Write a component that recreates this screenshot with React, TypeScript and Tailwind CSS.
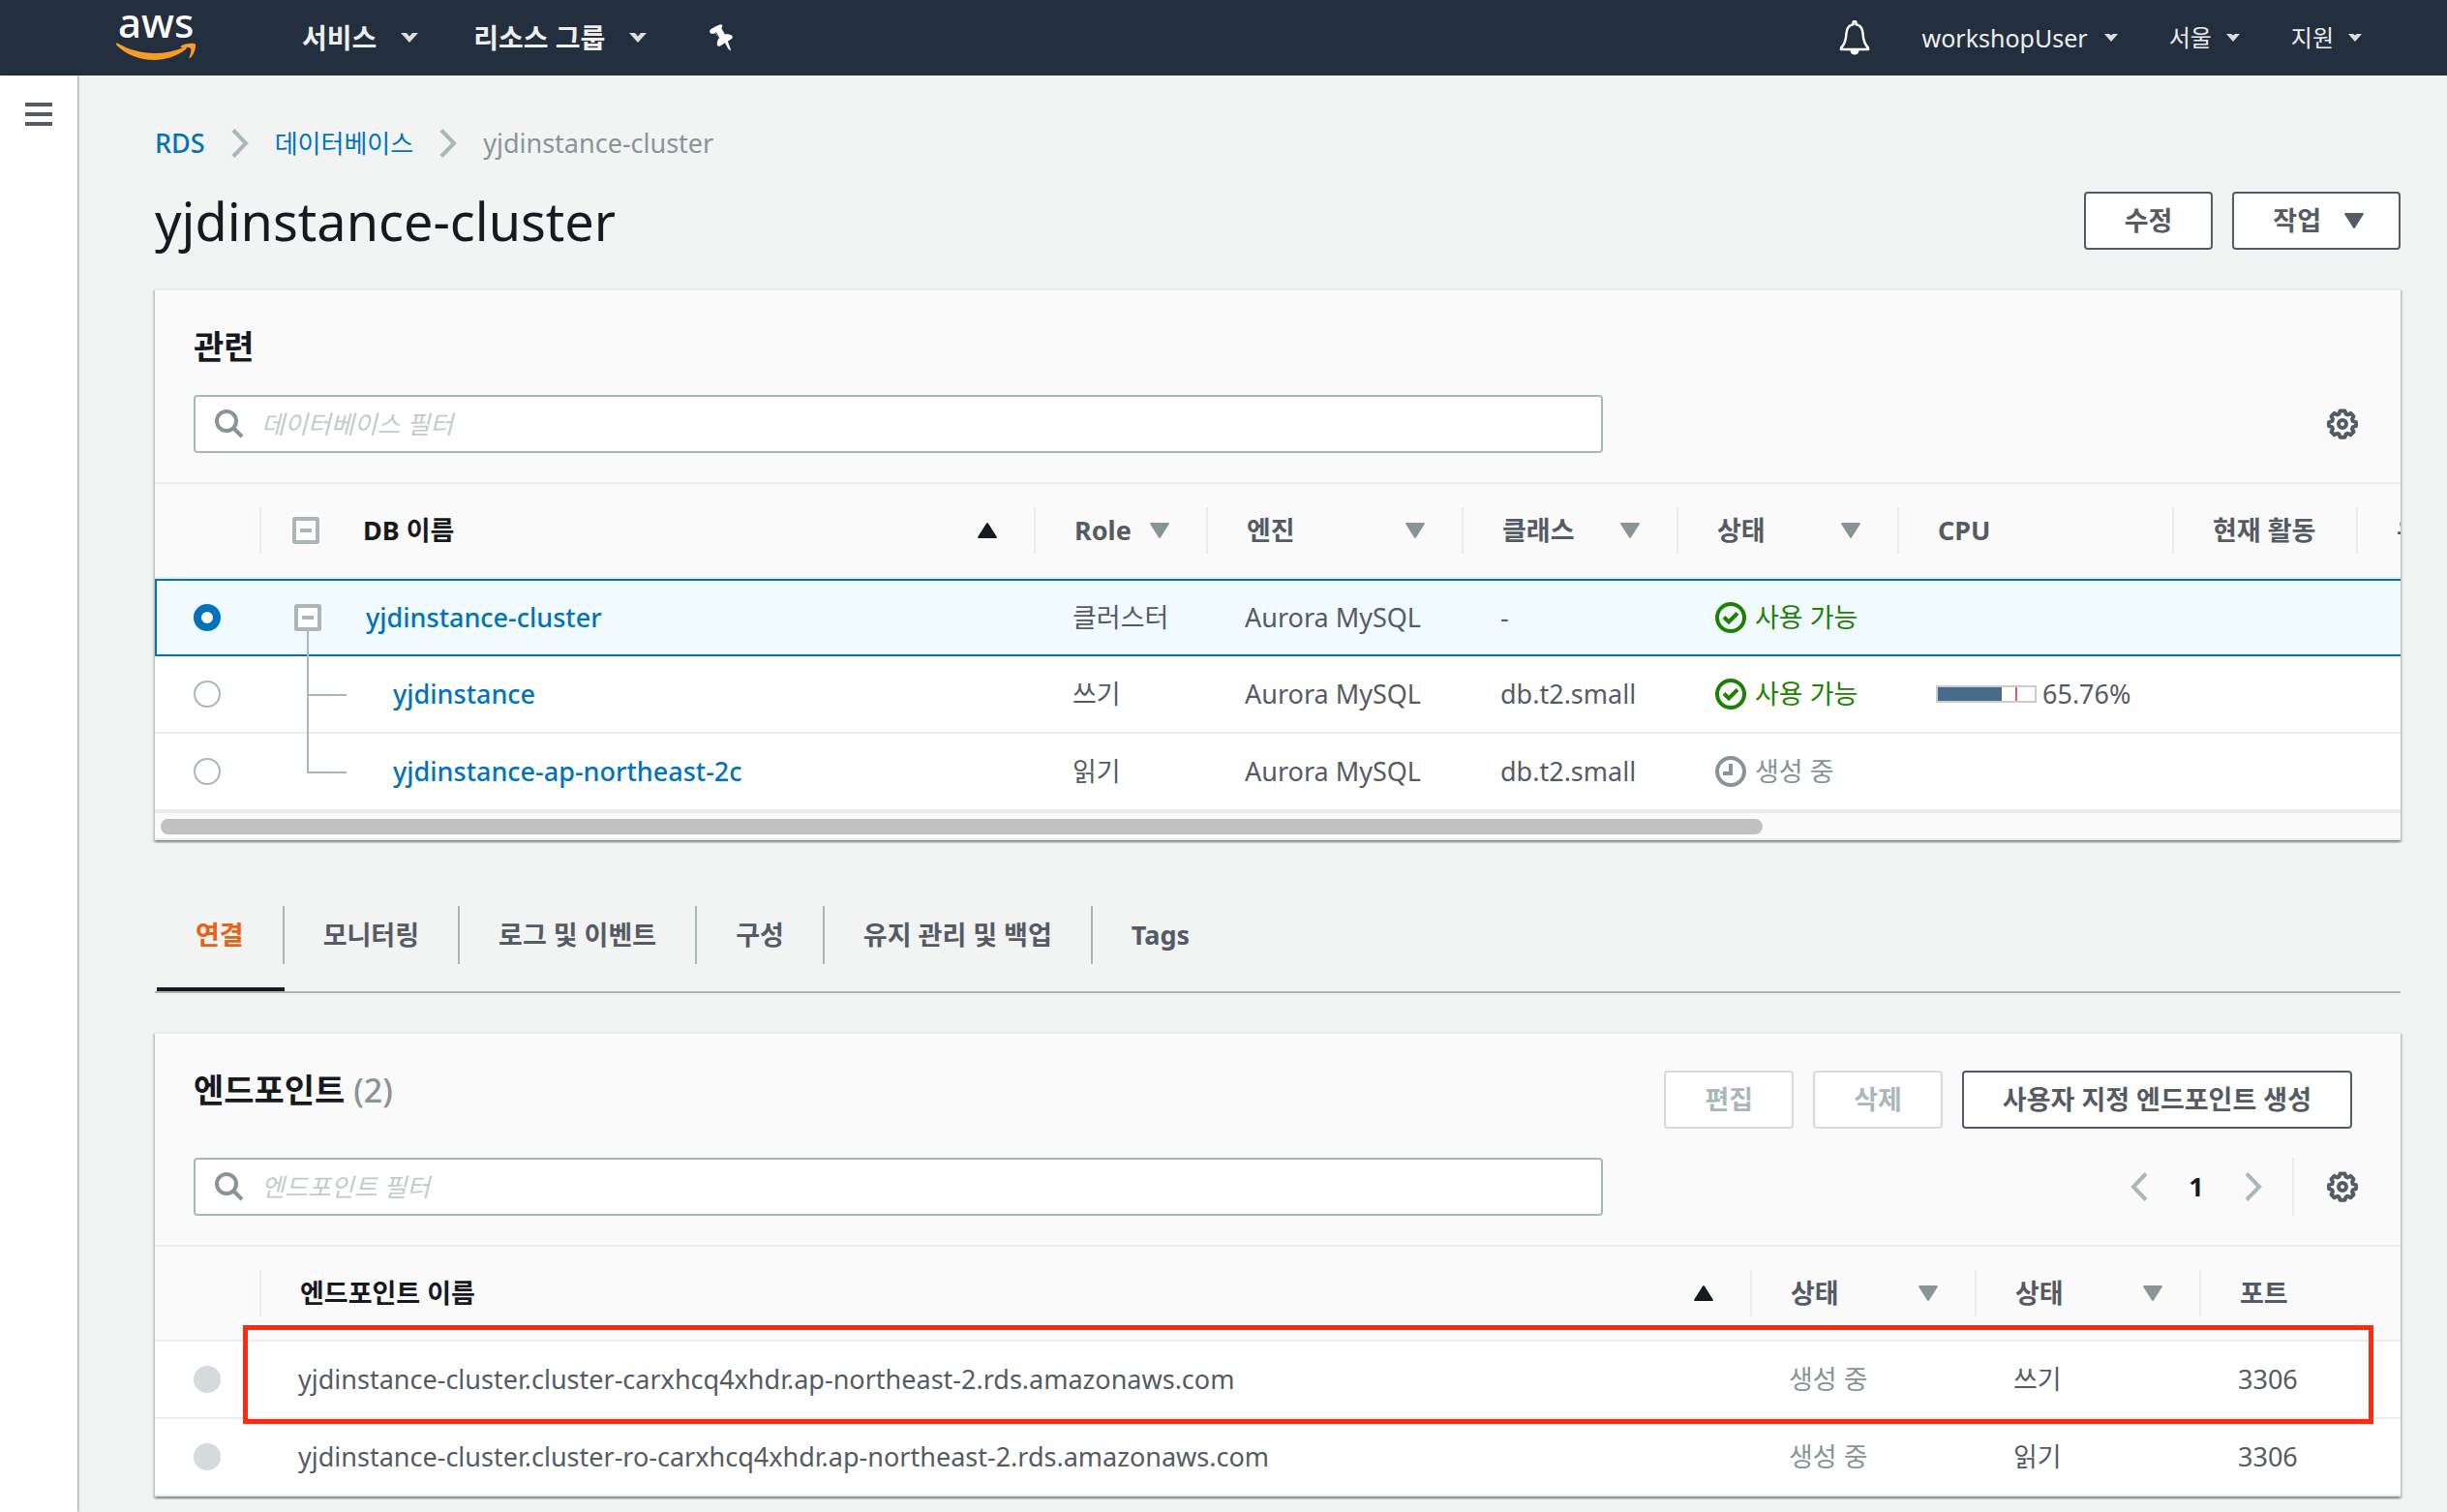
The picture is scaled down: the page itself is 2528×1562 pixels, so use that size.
import { useState } from "react";
import { clsx } from "clsx";

type Status = "available" | "creating";

const databases: {
  id: string;
  role: string;
  engine: string;
  size: string;
  status: Status;
  cpu?: number;
  depth: number;
}[] = [
  { id: "yjdinstance-cluster", role: "클러스터", engine: "Aurora MySQL", size: "-", status: "available", depth: 0 },
  { id: "yjdinstance", role: "쓰기", engine: "Aurora MySQL", size: "db.t2.small", status: "available", cpu: 65.76, depth: 1 },
  { id: "yjdinstance-ap-northeast-2c", role: "읽기", engine: "Aurora MySQL", size: "db.t2.small", status: "creating", depth: 1 },
];

const endpoints = [
  { name: "yjdinstance-cluster.cluster-carxhcq4xhdr.ap-northeast-2.rds.amazonaws.com", type: "쓰기", port: 3306 },
  { name: "yjdinstance-cluster.cluster-ro-carxhcq4xhdr.ap-northeast-2.rds.amazonaws.com", type: "읽기", port: 3306 },
];

const tabs = ["연결", "모니터링", "로그 및 이벤트", "구성", "유지 관리 및 백업", "Tags"];

export default function App() {
  return (
    <div className="flex min-h-screen flex-col bg-[#f2f3f3] font-['Noto_Sans','Noto_Sans_CJK_KR',sans-serif] text-[27px] leading-10 text-[#545b64]">
      <TopNav />
      <div className="flex flex-1">
        <aside className="z-10 w-20 shrink-0 bg-white pt-7 pl-[26px] shadow-[1px_0_2px_rgba(0,28,36,0.4)]">
          <button type="button" aria-label="메뉴" className="flex flex-col gap-1.5">
            <span className="h-1 w-7 bg-[#545b64]" />
            <span className="h-1 w-7 bg-[#545b64]" />
            <span className="h-1 w-7 bg-[#545b64]" />
          </button>
        </aside>
        <main className="min-w-0 flex-1 pt-[50px] pr-12 pb-4 pl-20">
          <Breadcrumbs />
          <div className="mt-[30px] flex items-center justify-between">
            <h1 className="text-[54px] leading-[60px] text-[#16191f]">yjdinstance-cluster</h1>
            <div className="flex gap-5">
              <Button>수정</Button>
              <Button className="pr-9">
                작업
                <Triangle className="text-[#545b64]" />
              </Button>
            </div>
          </div>
          <RelatedPanel />
          <Tabs />
          <EndpointPanel />
        </main>
      </div>
    </div>
  );
}

function TopNav() {
  return (
    <header className="flex h-[78px] shrink-0 items-center bg-[#232f3e] pl-[118px] text-[#eee] [text-shadow:0_2px_0_#000]">
      <a href="#home" aria-label="aws" className="mr-[108px]">
        <AwsLogo />
      </a>
      <button type="button" className="mr-14 flex items-center gap-6 text-[28px] font-bold">
        서비스
        <Vee />
      </button>
      <button type="button" className="mr-16 flex items-center gap-6 text-[28px] font-bold">
        리소스 그룹
        <Vee />
      </button>
      <button type="button" aria-label="고정">
        <PinIcon />
      </button>
      <button type="button" aria-label="알림" className="ml-auto">
        <BellIcon />
      </button>
      <button type="button" className="ml-[54px] flex items-center gap-4 text-[25px]">
        workshopUser
        <Caret />
      </button>
      <button type="button" className="ml-[52px] flex items-center gap-3.5 text-[24px]">
        서울
        <Caret />
      </button>
      <button type="button" className="mr-[87px] ml-[52px] flex items-center gap-3.5 text-[24px]">
        지원
        <Caret />
      </button>
    </header>
  );
}

function Breadcrumbs() {
  return (
    <nav aria-label="Breadcrumb" className="flex items-center">
      <a href="#rds" className="font-medium text-[#0073bb]">
        RDS
      </a>
      <ChevronRight className="mx-[26px]" />
      <a href="#databases" className="text-[26px] text-[#0073bb]">
        데이터베이스
      </a>
      <ChevronRight className="mx-[26px]" />
      <span className="text-[#879596]">yjdinstance-cluster</span>
    </nav>
  );
}

function Button({
  children,
  className,
  disabled,
}: {
  children: React.ReactNode;
  className?: string;
  disabled?: boolean;
}) {
  return (
    <button
      type="button"
      disabled={disabled}
      className={clsx(
        "flex h-[60px] items-center gap-6 rounded-sm border-2 bg-white px-10 font-bold whitespace-nowrap",
        disabled ? "border-[#d5dbdb] text-[#aab7b8]" : "border-[#545b64] text-[#545b64]",
        className
      )}
    >
      {children}
    </button>
  );
}

function Panel({ children, className }: { children: React.ReactNode; className?: string }) {
  return (
    <section
      className={clsx(
        "border-t-2 border-[#eaeded] bg-[#fafafa] shadow-[0_2px_2px_0_rgba(0,28,36,0.3),2px_2px_2px_0_rgba(0,28,36,0.15),-2px_2px_2px_0_rgba(0,28,36,0.15)]",
        className
      )}
    >
      {children}
    </section>
  );
}

function SearchBox({ id, placeholder }: { id: string; placeholder: string }) {
  return (
    <div className="flex h-[60px] w-[65%] items-center rounded-sm border-2 border-[#aab7b8] bg-white pl-5">
      <label htmlFor={id} aria-label={placeholder}>
        <SearchIcon />
      </label>
      <input
        id={id}
        type="text"
        placeholder={placeholder}
        className="ml-[18px] min-w-0 flex-1 text-[26px] outline-none placeholder:text-[#c3cbcb] placeholder:italic"
      />
    </div>
  );
}

const th = "relative h-[98px] border-b-2 border-[#eaeded] pr-10 pl-10 text-left font-bold";
const td = "h-20 py-0 whitespace-nowrap";

// short rule between two header cells
function Rule() {
  return <span className="absolute top-6 right-0 h-12 w-0.5 bg-[#eaeded]" />;
}

function SortHeader({ label, active, children }: { label: string; active?: boolean; children?: React.ReactNode }) {
  return (
    <th
      scope="col"
      aria-sort={active ? "ascending" : undefined}
      className={clsx(th, active && "text-[#16191f]")}
    >
      <div className="flex items-center">
        {children}
        {label}
        <Triangle className={clsx("ml-auto", active ? "rotate-180 text-[#16191f]" : "text-[#879596]")} />
      </div>
      <Rule />
    </th>
  );
}

function RelatedPanel() {
  const [selected, setSelected] = useState("yjdinstance-cluster");

  return (
    <Panel className="mt-10">
      <div className="border-b-2 border-[#eaeded] px-10 pt-[38px] pb-[30px]">
        <h2 className="text-[34px] font-bold text-[#16191f]">관련</h2>
        <div className="mt-[30px] flex items-center justify-between">
          <SearchBox id="db-filter" placeholder="데이터베이스 필터" />
          <button type="button" aria-label="설정" className="mr-1">
            <GearIcon />
          </button>
        </div>
      </div>

      <div className="overflow-hidden">
        <table className="w-[3238px] table-fixed border-separate border-spacing-0">
          <colgroup>
            <col className="w-[110px]" />
            <col className="w-[800px]" />
            <col className="w-[178px]" />
            <col className="w-[264px]" />
            <col className="w-[222px]" />
            <col className="w-[228px]" />
            <col className="w-[284px]" />
            <col className="w-[190px]" />
            <col />
          </colgroup>
          <thead>
            <tr>
              <td className={th}>
                <Rule />
              </td>
              <SortHeader label="DB 이름" active>
                <button type="button" aria-label="모두 접기" className="-ml-2 mr-[45px]">
                  <CollapseIcon />
                </button>
              </SortHeader>
              <SortHeader label="Role" />
              <SortHeader label="엔진" />
              <SortHeader label="클래스" />
              <SortHeader label="상태" />
              <th scope="col" className={th}>
                CPU
                <Rule />
              </th>
              <th scope="col" className={clsx(th, "whitespace-nowrap")}>
                현재 활동
                <Rule />
              </th>
              <th scope="col" className={th}>
                유지 관리
              </th>
            </tr>
          </thead>
          <tbody>
            {databases.map((db, i) => {
              const isSelected = db.id === selected;
              const isLast = i === databases.length - 1;
              const row = clsx(
                td,
                isSelected ? "border-y-2 border-[#0073bb] bg-[#f1faff]" : "border-b-2 border-[#eaeded] bg-white"
              );
              const cell = clsx(row, "pl-[38px]");
              return (
                <tr key={db.id}>
                  <td className={clsx(row, isSelected ? "border-l-2 pl-[38px]" : "pl-10")}>
                    <input
                      type="radio"
                      name="db"
                      aria-label={db.id}
                      checked={isSelected}
                      onChange={() => setSelected(db.id)}
                      className="block size-7 appearance-none rounded-full border-2 border-[#aab7b8] bg-white checked:border-8 checked:border-[#0073bb]"
                    />
                  </td>
                  <td className={clsx(cell, "relative")}>
                    {db.depth === 0 ? (
                      <>
                        <div className="flex items-center">
                          <button type="button" aria-label="접기" className="-ml-1 mr-[46px]">
                            <CollapseIcon />
                          </button>
                          <a href="#cluster" className="font-medium text-[#0073bb]">
                            {db.id}
                          </a>
                        </div>
                        <span className="absolute top-[52px] -bottom-0.5 left-[47px] w-0.5 bg-[#aab7b8]" />
                      </>
                    ) : (
                      <>
                        <span
                          className={clsx(
                            "absolute top-0 left-[47px] w-0.5 bg-[#aab7b8]",
                            isLast ? "h-10" : "-bottom-0.5"
                          )}
                        />
                        <span className="absolute top-[39px] left-[47px] h-0.5 w-[41px] bg-[#aab7b8]" />
                        <a href="#instance" className="ml-[98px] font-medium text-[#0073bb]">
                          {db.id}
                        </a>
                      </>
                    )}
                  </td>
                  <td className={cell}>{db.role}</td>
                  <td className={cell}>{db.engine}</td>
                  <td className={cell}>{db.size}</td>
                  <td className={cell}>
                    <StatusLabel status={db.status} />
                  </td>
                  <td className={cell}>{db.cpu !== undefined && <CpuMeter value={db.cpu} />}</td>
                  <td className={cell} />
                  <td className={cell} />
                </tr>
              );
            })}
          </tbody>
        </table>
        <div className="border-y-2 border-[#e8eaea] px-1.5 pt-1.5 pb-1">
          <div className="h-4 w-[71.7%] rounded-full bg-[#c1c1c1]" />
        </div>
      </div>
    </Panel>
  );
}

function StatusLabel({ status }: { status: Status }) {
  if (status === "available") {
    return (
      <span className="flex items-center gap-[9px] text-[#1d8102]">
        <svg viewBox="0 0 32 32" className="size-8" fill="none" stroke="currentColor" strokeWidth="4">
          <circle cx="16" cy="16" r="14" />
          <path d="M9 15.5l5 5 9-9" />
        </svg>
        사용 가능
      </span>
    );
  }
  return (
    <span className="flex items-center gap-[9px] text-[#879596]">
      <svg viewBox="0 0 32 32" className="size-8" fill="none" stroke="currentColor" strokeWidth="4">
        <circle cx="16" cy="16" r="14" />
        <path d="M16 8v10H8" />
      </svg>
      생성 중
    </span>
  );
}

function CpuMeter({ value }: { value: number }) {
  return (
    <div className="flex items-center gap-1.5">
      <div className="relative h-[18px] w-[104px] border-2 border-[#ccc] bg-white">
        <div className="h-full bg-[#486b8a]" style={{ width: `${value}%` }} />
        <span className="absolute inset-y-0 left-[80%] w-0.5 bg-[#d9605a]" />
      </div>
      {value}%
    </div>
  );
}

function Tabs() {
  const [active, setActive] = useState(tabs[0]);

  return (
    <div role="tablist" className="mt-[68px] flex border-b-2 border-[#aab7b8] pl-0.5">
      {tabs.map((tab, i) => (
        <button
          key={tab}
          type="button"
          role="tab"
          aria-selected={tab === active}
          onClick={() => setActive(tab)}
          className={clsx(
            "border-b-4 pb-6 font-bold",
            tab === active ? "border-[#16191f] text-[#ec5f15]" : "border-transparent text-[#545b64]"
          )}
        >
          <span
            className={clsx(
              "flex h-[60px] items-center px-10",
              i < tabs.length - 1 && "border-r-2 border-[#aab7b8]"
            )}
          >
            {tab}
          </span>
        </button>
      ))}
    </div>
  );
}

function EndpointPanel() {
  return (
    <Panel className="mt-10">
      <div className="border-b-2 border-[#eaeded] px-10 pt-[38px] pb-[30px]">
        <div className="flex items-start justify-between">
          <h2 className="text-[34px] font-bold text-[#16191f]">
            엔드포인트 <span className="font-medium text-[#879596]">(2)</span>
          </h2>
          <div className="mr-2.5 flex gap-5">
            <Button disabled>편집</Button>
            <Button disabled>삭제</Button>
            <Button>사용자 지정 엔드포인트 생성</Button>
          </div>
        </div>
        <div className="mt-[30px] flex items-center justify-between">
          <SearchBox id="endpoint-filter" placeholder="엔드포인트 필터" />
          <div className="mr-1 flex items-center">
            <button type="button" aria-label="이전">
              <ChevronRight className="rotate-180" />
            </button>
            <span className="w-[98px] text-center font-bold text-[#16191f]">1</span>
            <button type="button" aria-label="다음">
              <ChevronRight />
            </button>
            <span className="ml-[30px] h-[60px] w-0.5 bg-[#eaeded]" />
            <button type="button" aria-label="설정" className="ml-[34px]">
              <GearIcon />
            </button>
          </div>
        </div>
      </div>

      <div className="relative">
        <table className="w-full table-fixed border-separate border-spacing-0">
          <colgroup>
            <col className="w-[110px]" />
            <col />
            <col className="w-[232px]" />
            <col className="w-[232px]" />
            <col className="w-[206px]" />
          </colgroup>
          <thead>
            <tr>
              <td className={th}>
                <Rule />
              </td>
              <SortHeader label="엔드포인트 이름" active />
              <SortHeader label="상태" />
              <SortHeader label="상태" />
              <th scope="col" className={th}>
                포트
              </th>
            </tr>
          </thead>
          <tbody>
            {endpoints.map((endpoint) => {
              const row = clsx(td, "border-b-2 border-[#eaeded] bg-white");
              const cell = clsx(row, "pl-[38px]");
              return (
                <tr key={endpoint.name}>
                  <td className={clsx(row, "pl-10")}>
                    <input
                      type="radio"
                      name="endpoint"
                      disabled
                      aria-label={endpoint.name}
                      className="block size-7 appearance-none rounded-full bg-[#d5dbdb]"
                    />
                  </td>
                  <td className={cell}>{endpoint.name}</td>
                  <td className={clsx(cell, "text-[#879596]")}>생성 중</td>
                  <td className={cell}>{endpoint.type}</td>
                  <td className={cell}>{endpoint.port}</td>
                </tr>
              );
            })}
          </tbody>
        </table>
        {/* marks the writer endpoint */}
        <div className="pointer-events-none absolute top-[81px] right-7 left-[91px] h-[102px] border-[5px] border-[#ff290d]" />
      </div>
    </Panel>
  );
}

function AwsLogo() {
  return (
    <svg viewBox="0 0 86 64" className="h-16 w-[86px] overflow-visible" fill="#f89c24">
      <text x="4" y="32" fontFamily="Noto Sans" fontSize="42" fontWeight="500" fill="#fff" className="[text-shadow:none]">
        aws
      </text>
      <path d="M2 38.5c0-1 .8-1.300 1.800-.700C15 44.500 28 48 41.500 48c10.500 0 21-2.200 31-6.300 1.800-.700 3.200 1 1.400 2.300C65 51 52.500 55 41.500 55 26 55 12.500 49.500 3 40.300c-.700-.600-1-1.200-1-1.800z" />
      <path d="M69 40.500c3.500-2.800 13.500-3.600 14.700-2 1.300 1.700-.600 10.500-5.200 14.300-.700.600-1.400.300-1.100-.500 1.300-3 2.600-8 1.600-9.400-1-1.300-6.300-1-9.200-.700-1.100.100-1.500-1-.800-1.700z" />
    </svg>
  );
}

function Vee() {
  return (
    <svg viewBox="0 0 20 12" className="h-3 w-5" fill="#ddd">
      <path d="M1 1h6l3 3.500L13 1h6l-9 10z" />
    </svg>
  );
}

function Caret() {
  return (
    <svg viewBox="0 0 16 10" className="h-2.5 w-4" fill="#ddd">
      <path d="M1 1h5l2 1.500L10 1h5L8 9z" />
    </svg>
  );
}

function PinIcon() {
  return (
    <svg viewBox="0 0 24 28" className="h-7 w-6">
      <path
        fill="#fff"
        d="M10.500.500c1.600-.6 3 .3 2.800 1.800-.1.900-.5 1.400-.9 1.900l3.500 6.200c2.500-.5 5.600-.1 7.400 1.600 1.200 1.200.4 2.600-.8 3.300l-3.700 2.400 2.600 6.500.6 3.500-2.600-2.300-3.500-6.200-4.800 3.200c-1.500.9-3 .3-3.200-1.100-.3-2.700.5-4.900 1.800-6.800L5.900 9.300c-1.400.5-3.500.9-4.800.1C-.4 8.100-.1 6.200 1.200 5.300 4.300 3.300 7.500 1.700 10.500.500z"
      />
      <path d="M6.500 8.500l3.500 6" stroke="#232f3e" strokeWidth="1" fill="none" />
    </svg>
  );
}

function BellIcon() {
  return (
    <svg viewBox="0 0 32 36" className="h-9 w-8" fill="none" stroke="#fff" strokeWidth="2.500" strokeLinejoin="round">
      <path d="M14.500 2.500c0-2 3-2 3 0v1.700c4.500.800 6.700 4.300 7 9 .3 6.800 1.500 11.300 5.500 15.300v1.500H2v-1.500c4-4 5.200-8.500 5.500-15.300.3-4.700 2.500-8.200 7-9z" />
      <path d="M11.500 31h9c0 6-9 6-9 0z" fill="#fff" stroke="none" />
    </svg>
  );
}

function SearchIcon() {
  return (
    <svg viewBox="0 0 30 30" className="size-[30px]" fill="none" stroke="#879596" strokeWidth="4">
      <circle cx="12" cy="12" r="10" />
      <path d="M19 19l9 9" />
    </svg>
  );
}

function CollapseIcon() {
  return (
    <svg viewBox="0 0 28 28" className="block size-7" fill="none" stroke="#aab7b8" strokeWidth="4">
      <rect x="2" y="2" width="24" height="24" rx="0.500" fill="#fff" />
      <path d="M8 14h12" />
    </svg>
  );
}

function ChevronRight({ className }: { className?: string }) {
  return (
    <svg viewBox="0 0 20 30" className={clsx("h-[30px] w-5", className)} fill="none" stroke="#aab7b8" strokeWidth="4">
      <path d="M3 1.500L16 15 3 28.500" />
    </svg>
  );
}

function Triangle({ className }: { className?: string }) {
  return (
    <svg viewBox="0 0 20 16" className={clsx("h-4 w-5", className)} fill="currentColor">
      <path d="M1 0h18c.900 0 1.200.900.700 1.600L11 15.300c-.5.800-1.500.800-2 0L.3 1.600C-.2.900.1 0 1 0z" />
    </svg>
  );
}

function GearIcon() {
  return (
    <svg viewBox="0 0 32 32" className="block size-8" fill="none" stroke="#545b64" strokeWidth="4" strokeLinejoin="round">
      <path d="M13.500 2.500h5l1 3.200 1.800.800 3-1.600 3.200 3.300-1.500 3 .8 1.900 3.200 1v4l-3.200 1-.8 1.900 1.500 3-3.200 3.300-3-1.600-1.800.800-1 3.200h-5l-1-3.200-1.800-.800-3 1.600L4.500 24l1.500-3-.8-1.900-3.200-1v-4l3.200-1 .8-1.900-1.500-3 3.200-3.300 3 1.600 1.800-.800z" />
      <circle cx="16" cy="16" r="4" />
    </svg>
  );
}
